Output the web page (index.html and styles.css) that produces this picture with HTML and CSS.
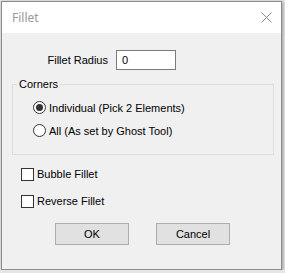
FILE: index.html
```html
<!DOCTYPE html>
<html lang="en">
  <head>
    <meta charset="utf-8" />
    <title>Fillet</title>
    <link rel="stylesheet" href="styles.css">
  </head>
  <body>
    <div class="window">
      <div class="titlebar">
        <span class="title">Fillet</span>
        <svg class="close" width="11" height="11" viewBox="0 0 11 11">
          <path d="M0.5 0.5 L10.5 10.5 M10.5 0.5 L0.5 10.5" stroke="#8a8a8a" stroke-width="1" fill="none" />
        </svg>
      </div>
      <div class="content">
        <div class="radius-row">
          <label class="radius-label" for="radius">Fillet Radius</label>
          <div class="textbox" id="radius">0</div>
        </div>
        <fieldset class="group">
          <legend>Corners</legend>
          <div class="option">
            <span class="radio checked"></span>
            <span>Individual (Pick 2 Elements)</span>
          </div>
          <div class="option">
            <span class="radio"></span>
            <span>All (As set by Ghost Tool)</span>
          </div>
        </fieldset>
        <div class="check-row first">
          <span class="checkbox"></span>
          <span>Bubble Fillet</span>
        </div>
        <div class="check-row">
          <span class="checkbox"></span>
          <span>Reverse Fillet</span>
        </div>
        <div class="buttons">
          <button>OK</button>
          <button>Cancel</button>
        </div>
      </div>
    </div>
  </body>
</html>
```

FILE: styles.css
```css
body {
  margin: 0;
  font-family: "Liberation Sans", Arial, sans-serif;
  font-size: 11px;
  color: #000;
  background: #e6e6e6;
}
.window {
  margin: 1px 0 0 1px;
  width: 281px;
  height: 269px;
  box-sizing: border-box;
  border: 1px solid #8c8c8c;
  background: #f0f0f0;
  box-shadow: 1px 1px 3px rgba(0, 0, 0, 0.35);
  display: flex;
  flex-direction: column;
}
.titlebar {
  height: 31px;
  background: #fff;
  display: flex;
  align-items: center;
  justify-content: space-between;
  padding: 0 9px 0 10px;
  flex-shrink: 0;
}
.title {
  color: #999;
  font-family: "Noto Sans", sans-serif;
  font-size: 12px;
  margin-top: -1px;
}
.close {
  display: block;
}
.content {
  padding: 0;
}
.radius-row {
  display: flex;
  align-items: center;
  margin-top: 17px;
  height: 20px;
}
.radius-label {
  width: 106px;
  text-align: right;
  margin-right: 8px;
}
.textbox {
  width: 60px;
  height: 20px;
  box-sizing: border-box;
  border: 1px solid #7a7a7a;
  background: #fff;
  padding: 0 5px;
  line-height: 18px;
}
.group {
  margin: 6px 0 0 10px;
  width: 262px;
  box-sizing: border-box;
  border: 1px solid #dcdcdc;
  padding: 4px 0 12px 20px;
}
.group legend {
  margin-left: -16px;
  padding: 0 2px;
  line-height: 16px;
}
.option {
  display: flex;
  align-items: center;
  height: 23px;
}
.radio {
  width: 13px;
  height: 13px;
  box-sizing: border-box;
  border: 1px solid #333;
  border-radius: 50%;
  background: #fff;
  margin-right: 3px;
  display: flex;
  align-items: center;
  justify-content: center;
}
.radio.checked::after {
  content: "";
  width: 7px;
  height: 7px;
  border-radius: 50%;
  background: #333;
}
.check-row {
  display: flex;
  align-items: center;
  height: 20px;
  margin: 7px 0 0 19px;
}
.check-row.first {
  margin-top: 9px;
}
.checkbox {
  width: 13px;
  height: 13px;
  box-sizing: border-box;
  border: 1px solid #333;
  background: #fff;
  margin-right: 3px;
}
.buttons {
  display: flex;
  gap: 27px;
  margin: 12px 0 0 53px;
}
button {
  width: 74px;
  height: 22px;
  box-sizing: border-box;
  border: 1px solid #adadad;
  background: #e1e1e1;
  font-family: inherit;
  font-size: 11px;
  color: #000;
  padding: 0;
}
```
